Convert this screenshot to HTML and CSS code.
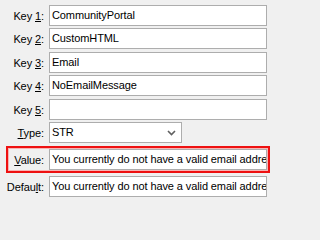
FILE: index.html
```html
<!DOCTYPE html>
<html>
<head>
<meta charset="utf-8">
<link rel="stylesheet" href="styles.css">
</head>
<body>
<div class="form">
  <div class="row">
    <span class="lbl">Key <u>1</u>:</span>
    <div class="field">CommunityPortal</div>
  </div>
  <div class="row g2">
    <span class="lbl">Key <u>2</u>:</span>
    <div class="field">CustomHTML</div>
  </div>
  <div class="row g3">
    <span class="lbl">Key <u>3</u>:</span>
    <div class="field">Email</div>
  </div>
  <div class="row g2">
    <span class="lbl">Key <u>4</u>:</span>
    <div class="field">NoEmailMessage</div>
  </div>
  <div class="row g3">
    <span class="lbl">Key <u>5</u>:</span>
    <div class="field"></div>
  </div>
  <div class="row g2">
    <span class="lbl"><u>T</u>ype:</span>
    <div class="select">
      <span class="sel-text">STR</span>
      <svg class="chev" width="9" height="6" viewBox="0 0 9 6"><path d="M1 1 L4.5 4.5 L8 1" fill="none" stroke="#606060" stroke-width="1.6"/></svg>
    </div>
  </div>
  <div class="row g3 hl">
    <span class="lbl"><u>V</u>alue:</span>
    <div class="field">You currently do not have a valid email address on file.</div>
  </div>
  <div class="row g3">
    <span class="lbl">Defau<u>l</u>t:</span>
    <div class="field">You currently do not have a valid email address on file.</div>
  </div>
</div>
</body>
</html>
```

FILE: styles.css
```css
html, body {
  margin: 0;
  padding: 0;
  background: #f0f0f0;
}

body {
  overflow: hidden;
}

.form {
  padding-top: 5px;
  display: flex;
  flex-direction: column;
  font-family: "Liberation Sans", Arial, sans-serif;
  font-size: 11px;
  letter-spacing: -0.1px;
  color: #000;
}

.row {
  display: flex;
  align-items: center;
  height: 21px;
}

.g2 { margin-top: 2px; }
.g3 { margin-top: 3px; }

.lbl {
  width: 45px;
  padding-right: 1px;
  box-sizing: border-box;
  text-align: right;
  margin-right: 4px;
  white-space: nowrap;
}

.lbl u {
  text-decoration: underline;
  text-underline-offset: 1px;
}

.field {
  width: 218px;
  height: 21px;
  box-sizing: border-box;
  background: #fff;
  border: 1px solid #adadad;
  padding: 0 1px 0 2px;
  line-height: 19px;
  white-space: nowrap;
  overflow: hidden;
}

.select {
  width: 133px;
  height: 21px;
  box-sizing: border-box;
  background: #fff;
  border: 1px solid #adadad;
  padding: 0 0 0 2px;
  line-height: 19px;
  display: flex;
  align-items: center;
  justify-content: space-between;
}

.chev {
  margin-right: 5px;
  margin-top: 1px;
}

.row.hl {
  height: 27px;
  margin-left: 6px;
  width: 264px;
  box-sizing: border-box;
  border: 2px solid #ee1111;
  box-shadow: inset 0 0 0 1px #f8b4b4;
  padding: 1px;
}

.row.hl .lbl {
  width: 36px;
}
```
